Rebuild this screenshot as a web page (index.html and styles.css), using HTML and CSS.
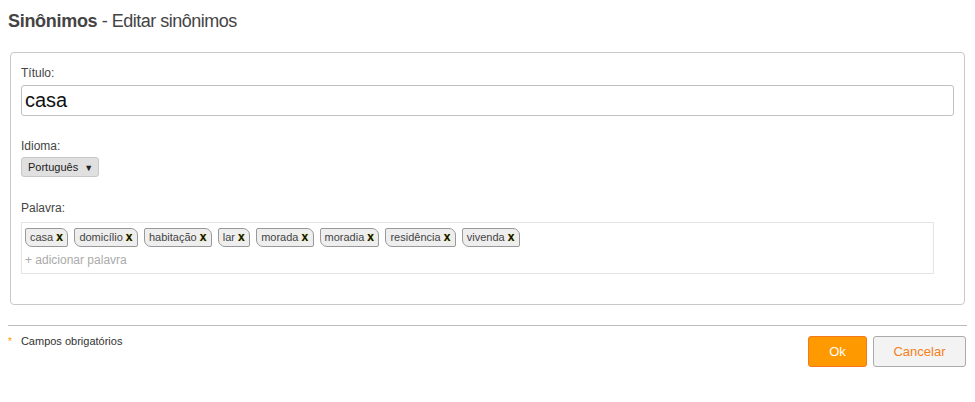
FILE: index.html
```html
<!DOCTYPE html>
<html lang="pt">
<head>
<meta charset="utf-8">
<link rel="stylesheet" href="styles.css">
</head>
<body>
<h1 class="page-title"><strong>Sinônimos</strong> - Editar sinônimos</h1>
<div class="panel">
  <div class="field">
    <label class="label">Título:</label>
    <div class="input">casa</div>
  </div>
  <div class="field field-lang">
    <label class="label">Idioma:</label>
    <div class="select">Português <span class="caret">▼</span></div>
  </div>
  <div class="field field-words">
    <label class="label">Palavra:</label>
    <div class="tagbox">
      <div class="tags">
        <span class="tag">casa <b class="x">x</b></span>
        <span class="tag">domicílio <b class="x">x</b></span>
        <span class="tag">habitação <b class="x">x</b></span>
        <span class="tag">lar <b class="x">x</b></span>
        <span class="tag">morada <b class="x">x</b></span>
        <span class="tag">moradia <b class="x">x</b></span>
        <span class="tag">residência <b class="x">x</b></span>
        <span class="tag">vivenda <b class="x">x</b></span>
      </div>
      <div class="add">+ adicionar palavra</div>
    </div>
  </div>
</div>
<div class="footer">
  <div class="required"><span class="star">*</span>Campos obrigatórios</div>
  <div class="buttons">
    <button class="btn btn-ok">Ok</button>
    <button class="btn btn-cancel">Cancelar</button>
  </div>
</div>
</body>
</html>
```
FILE: styles.css
```css
body {
  margin: 8px;
  font-family: "Liberation Sans", Arial, sans-serif;
  color: #333;
  background: #fff;
}
.page-title {
  margin: 1px 0 0 0;
  font-size: 18px;
  font-weight: normal;
  color: #444;
  line-height: 24px;
  letter-spacing: -0.5px;
}
.page-title strong { font-weight: bold; letter-spacing: -0.3px; }
.panel {
  margin: 19px 2px 0 2px;
  border: 1px solid #c8c8c8;
  border-radius: 4px;
  padding: 12px 10px 30px 10px;
  height: 209px;
}
.label {
  display: block;
  font-size: 12px;
  color: #444;
  line-height: 16px;
  margin-bottom: 4px;
}
.input {
  border: 1px solid #c0c0c0;
  border-radius: 3px;
  height: 29px;
  line-height: 29px;
  padding: 0 3px;
  font-size: 20px;
  color: #111;
}
.field-lang { padding-top: 22px; }
.field-lang .label { margin-bottom: 3px; }
.select {
  display: inline-block;
  background: #e0e0e0;
  border: 1px solid #c8c8c8;
  border-radius: 3px;
  font-size: 11px;
  color: #222;
  height: 18px;
  line-height: 18px;
  padding: 0 5px 0 6px;
}
.caret { font-size: 9px; margin-left: 3px; }
.field-words { padding-top: 23px; }
.field-words .label { margin-bottom: 6px; }
.tagbox {
  border: 1px solid #e4e4e4;
  margin-right: 20px;
  height: 45px;
  padding: 5px 3px 0 3px;
}
.tags { display: flex; gap: 6px; }
.tag {
  font-size: 11px;
  color: #444;
  background: #eee;
  border: 1px solid #999;
  border-radius: 2px 7px 2px 7px;
  height: 17px;
  line-height: 17px;
  padding: 0 4.4px 0 4px;
}
.x { color: #111; text-shadow: 0 0 1px #cc0; font-size: 12px; }
.add {
  font-size: 12px;
  color: #aaa;
  margin-top: 6px;
}
.footer {
  margin-top: 20px;
  border-top: 1px solid #bbb;
  display: flex;
  justify-content: space-between;
  align-items: flex-start;
  padding-top: 9px;
}
.required { font-size: 11px; color: #333; }
.star { color: #f90; margin-right: 9px; font-size: 10px; }
.buttons { display: flex; gap: 6px; margin-top: 1px; margin-right: 1px; }
.btn {
  height: 31px;
  font-family: "Liberation Sans", Arial, sans-serif;
  font-size: 13px;
  border-radius: 3px;
  cursor: pointer;
}
.btn-ok {
  width: 59px;
  background: #f90;
  border: 1px solid #f5781a;
  color: #fff;
}
.btn-cancel {
  width: 93px;
  background: #f3f3f3;
  border: 1px solid #aaa;
  color: #f57f20;
}
```
